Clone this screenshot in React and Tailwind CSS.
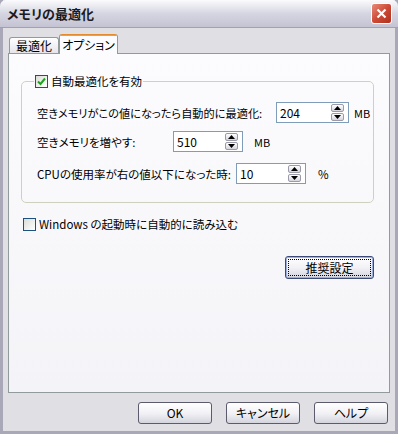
import React from "react";

const font = { fontFamily: '"Noto Sans CJK JP", "Liberation Sans", sans-serif' };

function Spin({ value, w }) {
  return (
    <div className={`relative shrink-0 h-[21px] ${w} border border-[#7f9db9] bg-white flex items-center`}>
      <span className="pl-[3px] text-[12px] text-black leading-none">{value}</span>
      <div className="absolute right-[4px] top-[1px] flex flex-col gap-[1px]">
        <div className="w-[13px] h-[8px] rounded-[2px] border border-[#9a9aa8] bg-gradient-to-b from-white to-[#d6d6e0] flex items-center justify-center">
          <svg width="7" height="4" viewBox="0 0 7 4"><path d="M0 4 L3.5 0 L7 4 Z" fill="#000" /></svg>
        </div>
        <div className="w-[13px] h-[8px] rounded-[2px] border border-[#9a9aa8] bg-gradient-to-b from-white to-[#d6d6e0] flex items-center justify-center">
          <svg width="7" height="4" viewBox="0 0 7 4"><path d="M0 0 L3.5 4 L7 0 Z" fill="#000" /></svg>
        </div>
      </div>
    </div>
  );
}

function Btn({ children }) {
  return (
    <div className="w-[74px] h-[22px] rounded-[3px] border border-[#5c5b6e] bg-gradient-to-b from-white via-[#f2f2f6] to-[#d4d4de] flex items-center justify-center">
      <span className="text-[12px] leading-[16px] text-black">{children}</span>
    </div>
  );
}

function Check({ checked }) {
  return (
    <div className="shrink-0 w-[13px] h-[13px] border border-[#1c5180] bg-gradient-to-br from-[#dcdcd7] to-white flex items-center justify-center">
      {checked && (
        <svg width="9" height="9" viewBox="0 0 9 9">
          <path d="M1 4.5 L3.5 7 L8 1.5" stroke="#21a121" strokeWidth="2" fill="none" />
        </svg>
      )}
    </div>
  );
}

export default function App() {
  return (
    <div style={font} className="w-[398px] h-[434px] bg-[#e0dfe3] flex flex-col border-x-[3px] border-b-[3px] border-[#a9a8b8] [font-feature-settings:'palt']">
      {/* title bar */}
      <div className="h-[28px] -mx-[3px] flex items-center justify-between pl-[7px] pr-[6px] rounded-t-[6px] bg-gradient-to-b from-[#fbfbfd] via-[#d6d6e2] to-[#c3c3d3] border-b border-[#a2a1b4]">
        <span className="text-[13px] font-bold text-[#1a1a22]">メモリの最適化</span>
        <div className="w-[21px] h-[21px] rounded-[3px] border border-white bg-gradient-to-br from-[#e88a7a] via-[#cc4a36] to-[#b0301e] flex items-center justify-center">
          <svg width="11" height="11" viewBox="0 0 11 11">
            <path d="M1.5 1.5 L9.5 9.5 M9.5 1.5 L1.5 9.5" stroke="#fff" strokeWidth="2.2" />
          </svg>
        </div>
      </div>

      <div className="flex-1 flex flex-col px-[5px] pt-[5px]">
        {/* tabs */}
        <div className="flex items-end h-[20px] pl-[1px] relative z-10">
          <div className="h-[16px] px-[6px] flex items-center text-[12px] text-black border border-b-0 border-[#919b9c] rounded-t-[3px] bg-gradient-to-b from-white to-[#e6e5ec]">
            最適化
          </div>
          <div className="h-[20px] -mb-[1px] w-[59px] flex flex-col border-x border-[#919b9c] bg-[#fcfcfe] rounded-t-[3px]">
            <div className="h-[3px] bg-[#f2a033] rounded-t-[3px] border-t border-[#e68b2c]" />
            <div className="flex-1 flex items-center justify-center text-[12px] text-black">オプション</div>
          </div>
        </div>

        {/* panel */}
        <div className="h-[340px] border border-[#919b9c] bg-gradient-to-b from-[#fcfcfe] to-[#f4f4f8] pl-[12px] pt-[19px] flex flex-col text-[11.5px] leading-[16px] text-black">
          <fieldset className="w-[353px] min-w-0 h-[130px] border border-[#d0d0bf] rounded-[5px] pl-[15px] pr-0 pb-0 m-0">
            <legend className="-ml-[3px] px-[1px] flex items-center gap-[3px]">
              <Check checked />
              <span>自動最適化を有効</span>
            </legend>
            <div className="flex flex-col pt-[13px]">
              <div className="flex items-center h-[21px]">
                <span className="w-[239px] shrink-0 whitespace-nowrap text-[11.2px]">空きメモリがこの値になったら自動的に最適化:</span>
                <Spin value="204" w="w-[73px]" />
                <span className="ml-[5px] text-[11px]">MB</span>
              </div>
              <div className="flex items-center h-[21px] mt-[8px]">
                <span className="w-[136px] shrink-0 whitespace-nowrap">空きメモリを増やす:</span>
                <Spin value="510" w="w-[70px]" />
                <span className="ml-[11px] text-[11px]">MB</span>
              </div>
              <div className="flex items-center h-[21px] mt-[11px]">
                <span className="w-[199px] shrink-0 whitespace-nowrap">CPUの使用率が右の値以下になった時:</span>
                <Spin value="10" w="w-[70px]" />
                <span className="ml-[12px]">%</span>
              </div>
            </div>
          </fieldset>

          <div className="flex items-center gap-[3px] mt-[13px] ml-[2px]">
            <Check />
            <span>Windows の起動時に自動的に読み込む</span>
          </div>

          <div className="flex justify-end w-[353px] mt-[24px]">
            <div className="w-[89px] h-[23px] rounded-[3px] border border-[#3c4a7a] bg-gradient-to-b from-white via-[#f2f2f6] to-[#d4d4de] p-[2px] shadow-[inset_0_0_0_1px_#9fb0dc]">
              <div className="w-full h-full flex items-center justify-center border border-dotted border-black text-[12px] leading-none">
                推奨設定
              </div>
            </div>
          </div>
        </div>

        {/* bottom buttons */}
        <div className="flex justify-end gap-[14px] pr-[2px] pt-[9px]">
          <Btn>OK</Btn>
          <Btn>キャンセル</Btn>
          <Btn>ヘルプ</Btn>
        </div>
      </div>
    </div>
  );
}
